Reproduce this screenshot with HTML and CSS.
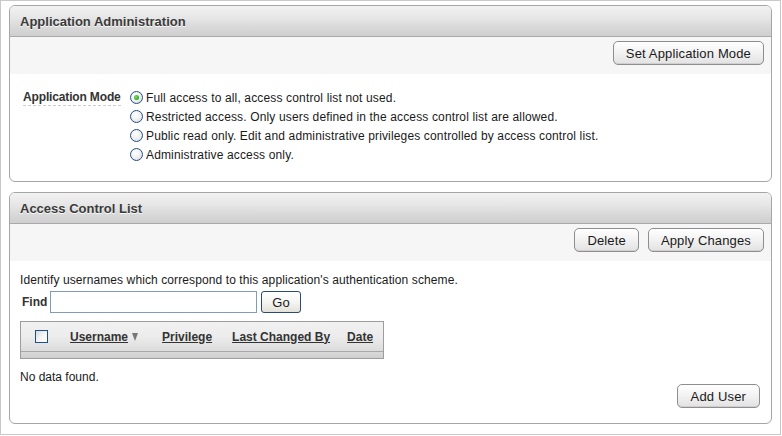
FILE: index.html
```html
<!DOCTYPE html>
<html>
<head>
<meta charset="utf-8">
<title>Application Administration</title>
<link rel="stylesheet" href="styles.css">
</head>
<body>
<div class="page">
  <section class="region region-admin">
    <div class="region-header"><h2>Application Administration</h2></div>
    <div class="button-bar">
      <button class="btn">Set Application Mode</button>
    </div>
    <div class="admin-body">
      <div class="field-label"><span>Application Mode</span></div>
      <ul class="radio-list">
        <li><span class="radio checked"></span><span>Full access to all, access control list not used.</span></li>
        <li><span class="radio"></span><span>Restricted access. Only users defined in the access control list are allowed.</span></li>
        <li><span class="radio"></span><span>Public read only. Edit and administrative privileges controlled by access control list.</span></li>
        <li><span class="radio"></span><span>Administrative access only.</span></li>
      </ul>
    </div>
  </section>

  <section class="region region-acl">
    <div class="region-header"><h2>Access Control List</h2></div>
    <div class="button-bar">
      <button class="btn">Delete</button>
      <button class="btn">Apply Changes</button>
    </div>
    <div class="acl-body">
      <p class="intro">Identify usernames which correspond to this application's authentication scheme.</p>
      <div class="find-row">
        <span class="find-label">Find</span>
        <span class="find-input"></span>
        <button class="go-btn">Go</button>
      </div>
      <div class="report">
        <div class="report-head">
          <span class="checkbox"></span>
          <span class="col col-user">Username</span><span class="sort-arrow"></span>
          <span class="col col-priv">Privilege</span>
          <span class="col col-changed">Last Changed By</span>
          <span class="col col-date">Date</span>
        </div>
        <div class="report-foot"></div>
      </div>
      <p class="nodata">No data found.</p>
      <div class="add-row">
        <button class="btn">Add User</button>
      </div>
    </div>
  </section>
</div>
</body>
</html>
```

FILE: styles.css
```css
* { box-sizing: border-box; }
html, body { margin: 0; padding: 0; background: #fff; }
body {
  font-family: "Liberation Sans", Arial, sans-serif;
  font-size: 12px;
  color: #1a1a1a;
}
.page {
  width: 781px;
  height: 435px;
  border: 1px solid #c9c9c9;
  padding: 4px 8px 0 8px;
}
.region {
  width: 763px;
  border: 1px solid #a6a6a6;
  border-radius: 6px;
  background: #fff;
  overflow: hidden;
}
.region-admin { height: 177px; }
.region-acl { height: 232px; margin-top: 10px; }

.region-header {
  height: 31px;
  border-bottom: 1px solid #aaaaaa;
  background: linear-gradient(#f2f2f2 0%, #e6e6e6 40%, #d9d9d9 70%, #cfcfcf 100%);
  display: flex;
  align-items: center;
  padding-left: 10px;
}
.region-header h2 {
  margin: 0;
  font-size: 13px;
  font-weight: bold;
  color: #3a3a3a;
  text-shadow: 0 1px 0 #fafafa;
}
.button-bar {
  height: 37px;
  background: #f6f6f6;
  display: flex;
  justify-content: flex-end;
  align-items: flex-start;
  padding: 4px 7px 0 0;
  gap: 9px;
}
.btn {
  height: 24px;
  padding: 0 12px;
  border: 1px solid #8e8e8e;
  border-radius: 5px;
  background: linear-gradient(#ffffff 0%, #f3f3f3 45%, #e2e2e2 100%);
  font-family: "Liberation Sans", Arial, sans-serif;
  font-size: 13px;
  letter-spacing: 0.15px;
  color: #1a1a1a;
  box-shadow: inset 0 -1px 0 #d0d0d0;
}

.admin-body {
  display: flex;
  padding: 14px 0 0 13px;
}
.field-label {
  width: 107px;
  padding-top: 2px;
}
.field-label span {
  font-weight: bold;
  color: #333;
  letter-spacing: -0.15px;
  border-bottom: 1px dashed #cccccc;
  padding-bottom: 1px;
}
.radio-list {
  list-style: none;
  margin: 0;
  padding: 0;
  letter-spacing: 0.15px;
}
.radio-list li {
  height: 19px;
  display: flex;
  align-items: center;
  gap: 3px;
}
.radio {
  width: 13px;
  height: 13px;
  border-radius: 50%;
  border: 1px solid #1f4f86;
  background: radial-gradient(circle at 40% 35%, #ffffff 0%, #f0f0f0 50%, #d6d6d6 100%);
  position: relative;
  flex: none;
}
.radio.checked::after {
  content: "";
  position: absolute;
  left: 3px;
  top: 3px;
  width: 5px;
  height: 5px;
  border-radius: 50%;
  background: radial-gradient(circle at 40% 40%, #7de06a 0%, #2aa81a 70%, #1b8a10 100%);
}

.acl-body {
  padding: 12px 10px 0 10px;
}
.intro {
  margin: 0;
  line-height: 14px;
  letter-spacing: 0.1px;
}
.find-row {
  display: flex;
  align-items: center;
  margin-top: 4px;
  padding-left: 2px;
  height: 22px;
}
.find-label {
  font-weight: bold;
  color: #333;
  width: 28px;
}
.find-input {
  width: 207px;
  height: 22px;
  border: 1px solid #7f9db9;
  background: #fff;
}
.go-btn {
  margin-left: 4px;
  width: 40px;
  height: 22px;
  padding: 0;
  border: 1px solid #2a4a77;
  border-radius: 3px;
  background: linear-gradient(#ffffff 0%, #f5f5f2 50%, #e4e2d8 100%);
  font-family: "Liberation Sans", Arial, sans-serif;
  font-size: 13px;
  color: #1a1a1a;
}
.report {
  width: 364px;
  margin-top: 8px;
  border: 1px solid #9d9d9d;
}
.report-head {
  height: 30px;
  display: flex;
  align-items: center;
  padding-left: 14px;
  background: linear-gradient(#f1f1f1 0%, #ececec 50%, #dcdcdc 100%);
  border-bottom: 1px solid #a8a8a8;
}
.report-foot {
  height: 6px;
  background: linear-gradient(#d9d9d9, #cfcfcf);
}
.checkbox {
  width: 13px;
  height: 13px;
  border: 1px solid #1f4f86;
  background: linear-gradient(135deg, #d8d8d8 0%, #f4f4f4 50%, #ffffff 100%);
  flex: none;
}
.col {
  font-weight: bold;
  color: #333;
  text-decoration: underline;
}
.col-user { margin-left: 22px; }
.sort-arrow {
  margin-left: 4px;
  width: 0;
  height: 0;
  border-left: 3px solid transparent;
  border-right: 3px solid transparent;
  border-top: 8px solid #777;
}
.col-priv { margin-left: 24px; }
.col-changed { margin-left: 20px; }
.col-date { margin-left: 17px; }
.nodata {
  margin: 11px 0 0 0;
  line-height: 14px;
}
.add-row {
  display: flex;
  justify-content: flex-end;
  padding-right: 1px;
  margin-top: 0;
}
.add-row .btn { padding: 0 13px; }
```
